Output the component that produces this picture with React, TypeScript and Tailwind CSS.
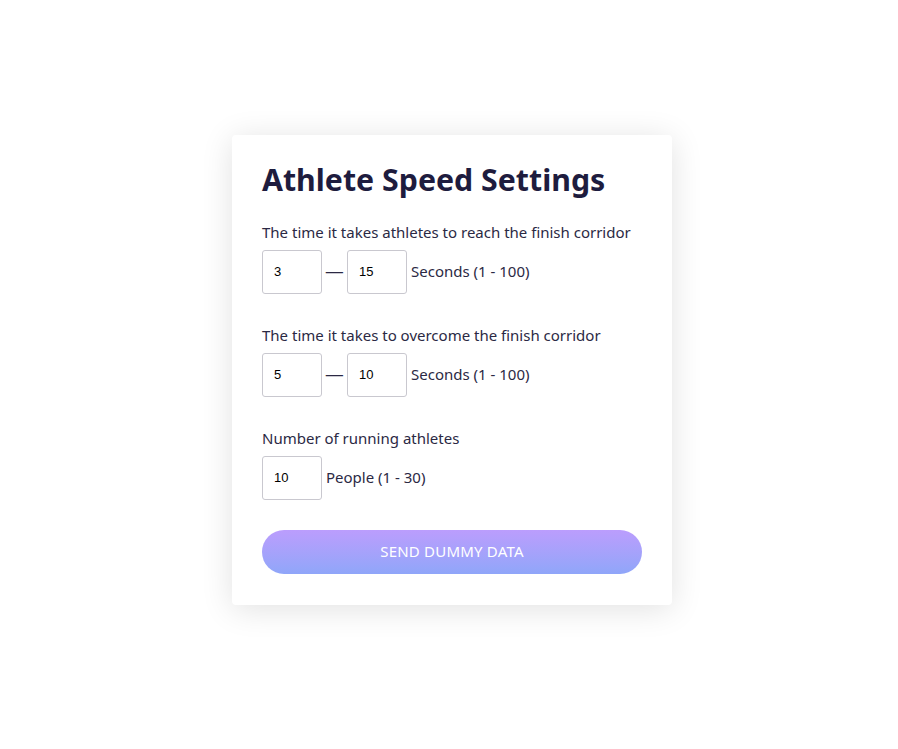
import { useState } from "react";

function NumInput({ value, onChange }: { value: string; onChange: (v: string) => void }) {
  return (
    <input
      value={value}
      onChange={(e) => onChange(e.target.value)}
      className="h-[44px] w-[60px] rounded-[3px] border border-[#c9c8cf] bg-white px-[11px] font-['Liberation_Sans',Arial,sans-serif] text-[13px] text-black outline-none"
    />
  );
}

export default function App() {
  const [reachMin, setReachMin] = useState("3");
  const [reachMax, setReachMax] = useState("15");
  const [passMin, setPassMin] = useState("5");
  const [passMax, setPassMax] = useState("10");
  const [people, setPeople] = useState("10");

  return (
    <div className="flex min-h-screen items-center justify-center bg-white font-['Noto_Sans',sans-serif] text-[#2b2944]">
      <div className="-mt-[10px] ml-[6px] w-[440px] rounded-[4px] bg-white px-[30px] pt-[21px] pb-[31px] shadow-[0_4px_32px_rgba(0,0,0,0.12)]">
        <h1 className="text-[30.3px] leading-[48px] font-bold text-[#1e1c3e]">Athlete Speed Settings</h1>

        <div className="mt-[16px] text-[15px] leading-[24px]">The time it takes athletes to reach the finish corridor</div>
        <div className="mt-[6px] flex items-center gap-[4px] text-[15px]">
          <NumInput value={reachMin} onChange={setReachMin} />
          <span className="px-[1px]"><span className="inline-block scale-x-125">—</span></span>
          <NumInput value={reachMax} onChange={setReachMax} />
          <span>Seconds (1 - 100)</span>
        </div>

        <div className="mt-[29px] text-[15px] leading-[24px]">The time it takes to overcome the finish corridor</div>
        <div className="mt-[6px] flex items-center gap-[4px] text-[15px]">
          <NumInput value={passMin} onChange={setPassMin} />
          <span className="px-[1px]"><span className="inline-block scale-x-125">—</span></span>
          <NumInput value={passMax} onChange={setPassMax} />
          <span>Seconds (1 - 100)</span>
        </div>

        <div className="mt-[29px] text-[15px] leading-[24px]">Number of running athletes</div>
        <div className="mt-[6px] flex items-center gap-[4px] text-[15px]">
          <NumInput value={people} onChange={setPeople} />
          <span>People (1 - 30)</span>
        </div>

        <button className="mt-[30px] h-[44px] w-[380px] rounded-full bg-gradient-to-b from-[#bb9dfd] to-[#8fa6f9] text-[15px] tracking-[0.2px] text-white uppercase">
          Send dummy data
        </button>
      </div>
    </div>
  );
}
